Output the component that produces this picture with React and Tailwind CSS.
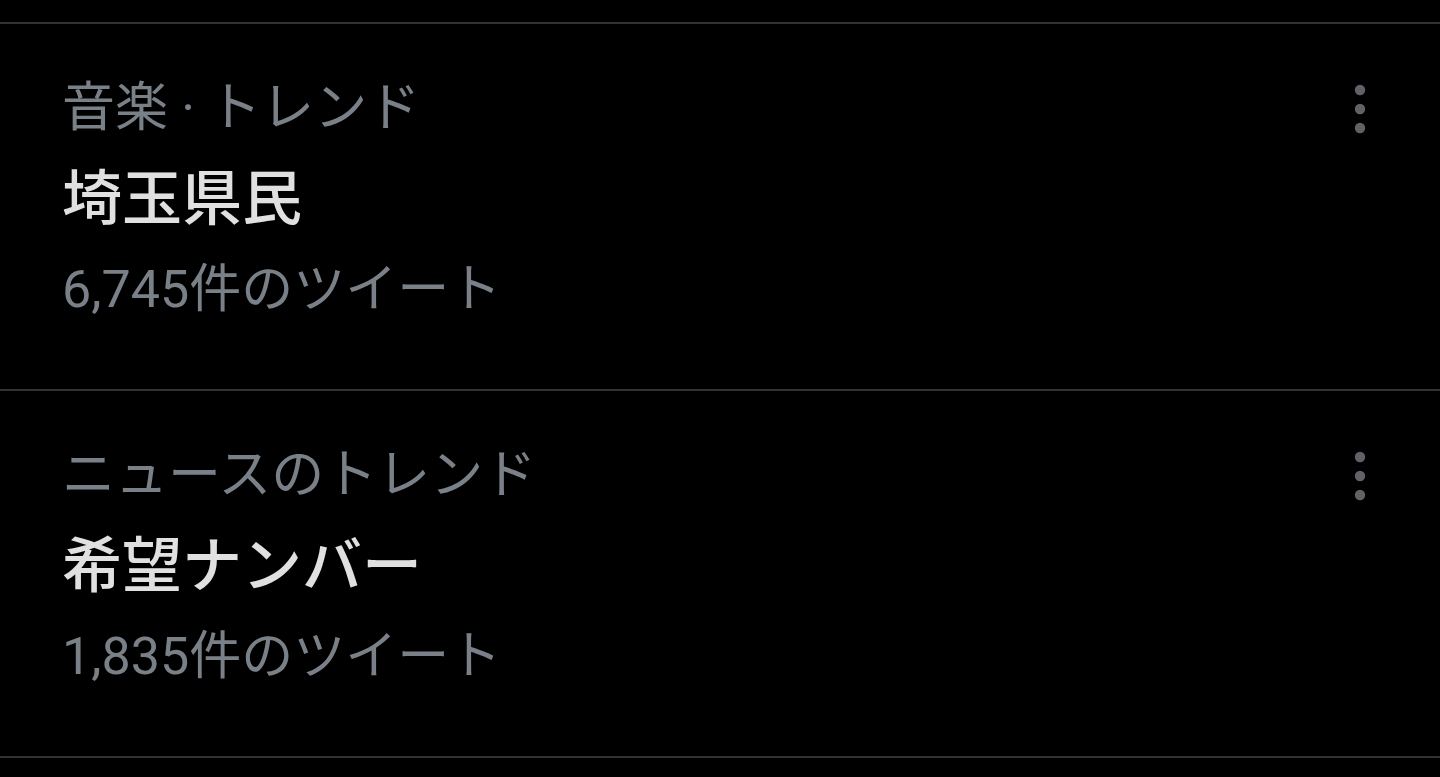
const TRENDS = [
  { category: '音楽 · トレンド', title: '埼玉県民', count: '6,745件のツイート' },
  { category: 'ニュースのトレンド', title: '希望ナンバー', count: '1,835件のツイート' },
]

function MoreIcon() {
  return (
    <svg width="12" height="50" viewBox="0 0 12 50" className="block">
      <circle cx="6" cy="6" r="5.2" fill="#5f6368" />
      <circle cx="6" cy="25" r="5.2" fill="#5f6368" />
      <circle cx="6" cy="44" r="5.2" fill="#5f6368" />
    </svg>
  )
}

export default function App() {
  return (
    <div
      className="min-h-screen bg-black"
      style={{ fontFamily: 'Roboto, "Noto Sans CJK JP", sans-serif' }}
    >
      <div className="h-[22px]" />
      <div className="h-[2px] bg-[#2f3336]" />
      {TRENDS.map((t) => (
        <div key={t.title}>
          <div className="h-[365px] flex justify-between pl-[62px] pr-[74px]">
            <div className="flex flex-col pt-[52px]">
              <div className="text-[53px] leading-[64px] text-[#7a8087]">{t.category}</div>
              <div className="mt-[20px] text-[60px] leading-[80px] font-medium text-[#e0e0e0]">{t.title}</div>
              <div className="mt-[18px] text-[52px] leading-[64px] text-[#7a8087]">{t.count}</div>
            </div>
            <div className="pt-[60px]">
              <MoreIcon />
            </div>
          </div>
          <div className="h-[2px] bg-[#2f3336]" />
        </div>
      ))}
    </div>
  )
}
